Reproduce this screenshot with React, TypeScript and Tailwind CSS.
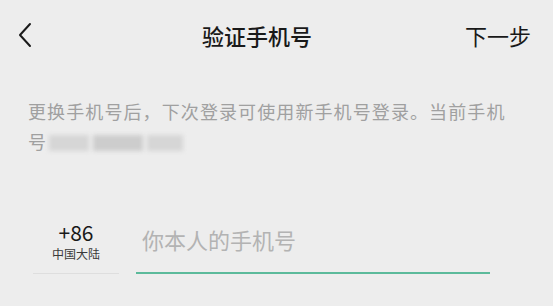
const font = { fontFamily: '"Noto Sans CJK SC", "Noto Sans", sans-serif' };

function BackIcon() {
  return (
    <svg width="16" height="26" viewBox="0 0 16 26" fill="none">
      <path d="M13 2 L3 13 L13 24" stroke="#1a1a1a" strokeWidth="2" strokeLinecap="round" strokeLinejoin="round" />
    </svg>
  );
}

export default function App() {
  return (
    <div className="h-[306px] w-[553px] overflow-hidden bg-[#ededed]" style={font}>
      <header className="relative flex h-[70px] items-center justify-between pl-[17px] pr-[22px]">
        <BackIcon />
        <h1 className="absolute left-[202px] text-[22px] font-medium text-[#191919]">验证手机号</h1>
        <span className="text-[22px] text-[#191919]">下一步</span>
      </header>

      <p className="mt-[26px] pl-[28px] pr-[36px] text-[18px] leading-[30px] tracking-[1.1px] text-[#a0a0a0]">
        更换手机号后，下次登录可使用新手机号登录。当前手机号
        <span className="ml-[2px] inline-flex h-[16px] w-[134px] translate-y-[2px] items-center gap-[4px] blur-[2px]">
          <span className="h-full w-[40px] bg-[#d6d6d6]" />
          <span className="h-full w-[50px] bg-[#cdcdcd]" />
          <span className="h-full w-[36px] bg-[#d6d6d6]" />
        </span>
      </p>

      <div className="mt-[64px] flex items-end pl-[33px] pr-[63px]">
        <div className="flex w-[86px] flex-col items-center">
          <span className="text-[21px] leading-[24px] text-[#191919]">+86</span>
          <span className="mt-[2px] text-[12px] leading-[15px] text-[#3a3a3a]">中国大陆</span>
          <div className="mt-[12px] h-px w-full bg-[#dedede]" />
        </div>
        <div className="ml-[17px] flex flex-1 flex-col">
          <span className="pb-[18px] pl-[6px] text-[22px] leading-[30px] text-[#b3b3b3]">你本人的手机号</span>
          <div className="h-[2px] w-full bg-[#5cba9b]" />
        </div>
      </div>
    </div>
  );
}
